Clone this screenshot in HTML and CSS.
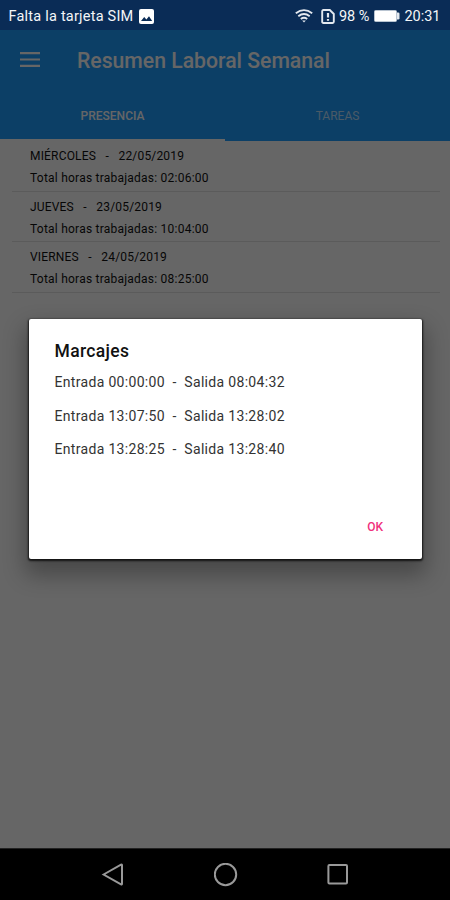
FILE: index.html
```html
<!DOCTYPE html>
<html lang="es">

<head>
    <meta charset="utf-8">
    <meta name="viewport" content="width=device-width, initial-scale=1">
    <title>Resumen Laboral Semanal</title>
    <link rel="stylesheet" href="styles.css">
</head>

<body>
    <div class="phone">
        <div class="status">
            <span class="sim">Falta la tarjeta SIM</span>
            <svg class="photo" width="15" height="15" viewBox="0 0 15 15">
                <rect width="15" height="15" rx="2" fill="#fff" />
                <path d="M2 12l3.2-4 2.2 2.4L10 7.2l3.2 4.8z" fill="#0a2c56" />
            </svg>
            <svg class="wifi" width="18" height="14" viewBox="0 0 18 14" fill="none" stroke="#e4e9ef" stroke-width="1.8">
                <path d="M.8 4.3Q9-2.1 17.2 4.3M3.3 7.2q5.7-4.5 11.4 0M5.8 10q3.2-2.5 6.4 0" />
                <path d="M7.2 11.5h3.6L9 13.6z" fill="#e4e9ef" stroke="none" />
            </svg>
            <svg class="simcard" width="14" height="15" viewBox="0 0 14 15" fill="none" stroke="#e4e9ef" stroke-width="1.9">
                <path d="M1.2 2.2q0-1.2 1.2-1.2h6.4l4 4v7.8q0 1.2-1.2 1.2H2.4q-1.2 0-1.2-1.2z" />
                <path d="M7 4v4.6M7 10v1.8" stroke-width="2.2" />
            </svg>
            <span class="percent">98 %</span>
            <svg class="battery" width="26" height="12" viewBox="0 0 26 12">
                <rect x=".5" y=".5" width="22" height="11" rx="1" fill="#fff" stroke="#b9c4d1" />
                <path d="M23 2.5h1.2q1.3 0 1.3 1.3v4.4q0 1.3-1.3 1.3H23z" fill="#e4e9ef" />
            </svg>
            <span class="clock">20:31</span>
        </div>

        <div class="app">
            <div class="header">
                <div class="toolbar">
                    <svg class="menu" width="20" height="15" viewBox="0 0 20 15">
                        <path d="M0 1.200h20M0 7.500h20M0 13.800h20" />
                    </svg>
                    <span class="title">Resumen Laboral Semanal</span>
                </div>
                <div class="tabs">
                    <div class="tab active"><span>PRESENCIA</span></div>
                    <div class="tab"><span>TAREAS</span></div>
                </div>
            </div>
            <div class="list">
                <div class="day">
                    <p class="name">MIÉRCOLES&nbsp;&nbsp; -&nbsp;&nbsp; 22/05/2019</p>
                    <p class="total">Total horas trabajadas: 02:06:00</p>
                </div>
                <div class="day">
                    <p class="name">JUEVES&nbsp;&nbsp; -&nbsp;&nbsp; 23/05/2019</p>
                    <p class="total">Total horas trabajadas: 10:04:00</p>
                </div>
                <div class="day">
                    <p class="name">VIERNES&nbsp;&nbsp; -&nbsp;&nbsp; 24/05/2019</p>
                    <p class="total">Total horas trabajadas: 08:25:00</p>
                </div>
            </div>

            <div class="scrim">
                <div class="dialog">
                    <h2>Marcajes</h2>
                    <p>Entrada 00:00:00&nbsp; -&nbsp; Salida 08:04:32</p>
                    <p>Entrada 13:07:50&nbsp; -&nbsp; Salida 13:28:02</p>
                    <p>Entrada 13:28:25&nbsp; -&nbsp; Salida 13:28:40</p>
                    <div class="actions"><span class="ok">OK</span></div>
                </div>
            </div>
        </div>

        <div class="nav">
            <svg width="24" height="24" viewBox="0 0 24 24"><path d="M2.6 11.5L20 1.6q1-.4 1 .6v18.600q0 1-1 .6z" /></svg>
            <svg width="24" height="24" viewBox="0 0 24 24"><circle cx="11.5" cy="11.5" r="10.7" /></svg>
            <svg width="24" height="24" viewBox="0 0 24 24"><rect x="2.4" y="1.9" width="18.600" height="18.600" rx="1" /></svg>
        </div>
    </div>
</body>

</html>
```

FILE: styles.css
```css
body {
    margin: 0;
    font-family: Roboto, "Liberation Sans", sans-serif;
}

p, h2 {
    margin: 0;
}

.phone {
    display: flex;
    flex-direction: column;
    height: 900px;
    overflow: hidden;
}

.status {
    display: flex;
    align-items: center;
    box-sizing: border-box;
    height: 30px;
    padding: 2px 9.5px 0 8.5px;
    background: #0a2c56;
    color: #f4f6f8;
    font-size: 14.5px;
    white-space: nowrap;
}

.sim {
    letter-spacing: .22px;
}

.photo {
    margin-left: 6px;
}

.wifi {
    margin-left: auto;
}

.simcard {
    margin: 0 4px 0 8px;
}

.battery {
    margin: 0 4px 0 5px;
}

.app {
    position: relative;
    flex: 1;
    background: #fff;
}

.header {
    height: 111px;
    background: #209dff;
}

.toolbar {
    display: flex;
    align-items: center;
    height: 61px;
    padding-left: 20px;
    color: #fff;
}

.menu {
    margin: -2px 37px 0 0;
    stroke: #fff;
    stroke-width: 2.2;
}

.title {
    font-size: 21.2px;
    font-weight: 500;
    white-space: nowrap;
}

.tabs {
    display: flex;
    height: 50px;
}

.tab {
    display: flex;
    flex: 1;
    align-items: center;
    justify-content: center;
    box-sizing: border-box;
    padding-top: 2px;
    border-bottom: 2px solid transparent;
    color: rgba(255, 255, 255, .7);
    font-size: 12px;
}

.active {
    border-color: #fff;
    color: #fff;
    font-weight: 500;
}

.list {
    padding: 0 10px 0 12px;
    color: #111;
    font-size: 12px;
}

.day {
    box-sizing: border-box;
    height: 50.7px;
    padding: 4px 0 0 18px;
    border-bottom: 1px solid #e4e4e4;
    line-height: 22px;
}

.name {
    letter-spacing: .18px;
}

.total {
    letter-spacing: .23px;
}

.scrim {
    position: absolute;
    inset: 0;
    background: rgba(0, 0, 0, .6);
}

.dialog {
    display: flex;
    flex-direction: column;
    box-sizing: border-box;
    width: 393.5px;
    height: 240px;
    margin: 289px 0 0 28.5px;
    padding: 21px 26px;
    border-radius: 2px;
    background: #fff;
    box-shadow: 0 1px 2px 1px rgba(0, 0, 0, .75), 0 12px 22px 4px rgba(0, 0, 0, .3);
    color: #333;
    font-size: 14px;
    letter-spacing: .32px;
    line-height: 33.7px;
}

.dialog h2 {
    margin-bottom: 4px;
    color: #111;
    font-size: 17.5px;
    font-weight: 500;
    letter-spacing: .35px;
    line-height: 22px;
}

.dialog p {
    height: 33.7px;
    white-space: nowrap;
}

.actions {
    margin: auto 13px -1px 0;
    color: #f0307c;
    font-size: 12px;
    font-weight: 500;
    letter-spacing: 0;
    line-height: 24px;
    text-align: right;
}

.nav {
    display: flex;
    align-items: center;
    justify-content: space-between;
    box-sizing: border-box;
    height: 52px;
    padding: 0 100px 0 101px;
    border-top: 1px solid #222;
    background: #000;
}

.nav svg {
    fill: none;
    stroke: #999;
    stroke-width: 2;
}
```
